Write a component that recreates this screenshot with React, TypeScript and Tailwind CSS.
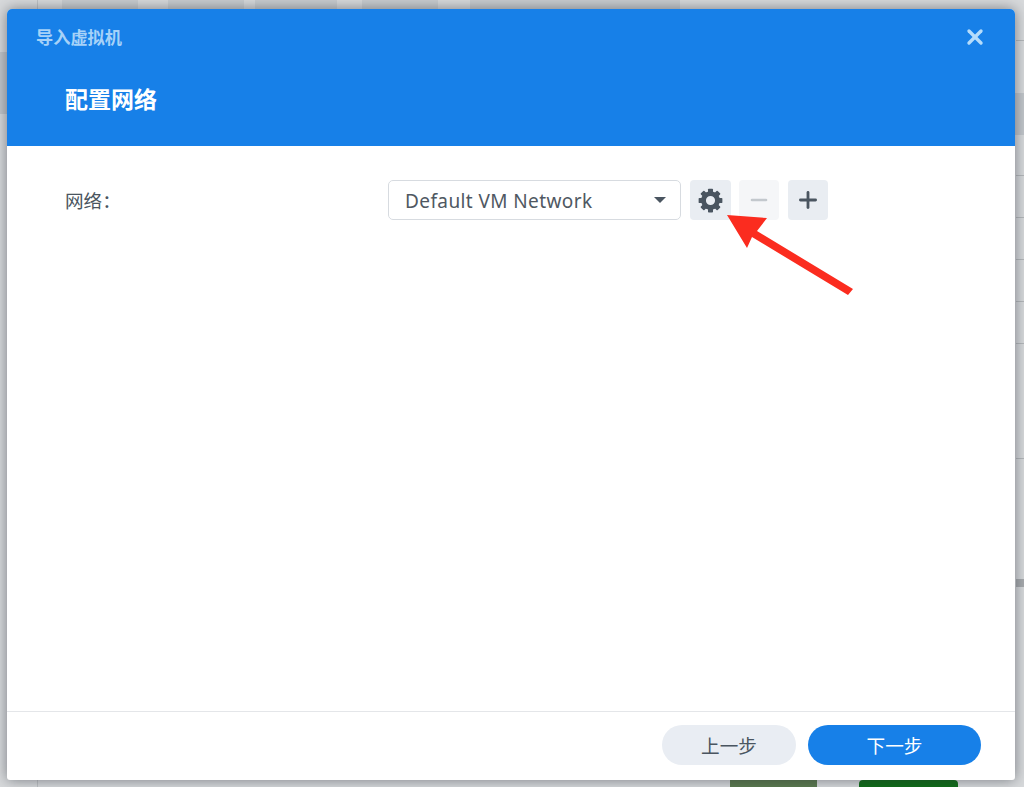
import { X, Minus, Plus } from "lucide-react";

const cjk = "font-['Noto_Sans_CJK_SC','Liberation_Sans',sans-serif]";

// Page behind the dialog, only its edges stay visible
function Backdrop() {
  return (
    <div className="absolute inset-0 overflow-hidden bg-[#d8dadc]">
      <div className="absolute left-0 top-[52px] h-[62px] w-[7px] bg-[#c2c6cb]" />
      <div className="absolute left-[1015px] top-[93px] h-[42px] w-[9px] bg-[#c2c6cb]" />
      <div className="absolute left-[37px] top-0 h-full w-px bg-[#bfc2c5]" />
      <div className="absolute left-[62px] top-0 h-[9px] w-[76px] bg-[#c9cdd0]" />
      <div className="absolute left-[168px] top-0 h-[9px] w-[76px] bg-[#c9cdd0]" />
      <div className="absolute left-[255px] top-0 h-[9px] w-[82px] bg-[#c9cdd0]" />
      <div className="absolute left-[362px] top-0 h-[9px] w-[76px] bg-[#c9cdd0]" />
      <div className="absolute left-[470px] top-0 h-[9px] w-[210px] bg-[#c9cdd0]" />
      <div className="absolute left-[730px] top-[780px] h-[7px] w-[87px] bg-[#5b7a4e]" />
      <div className="absolute left-[859px] top-[780px] h-[7px] w-[99px] rounded-t-sm bg-[#0f6d17]" />
      <div className="absolute left-[1016px] top-[40px] h-px w-2 bg-[#b5b8bb]" />
      <div className="absolute left-[1016px] top-[175px] h-px w-2 bg-[#b5b8bb]" />
      <div className="absolute left-[1016px] top-[217px] h-px w-2 bg-[#b5b8bb]" />
      <div className="absolute left-[1016px] top-[259px] h-px w-2 bg-[#b5b8bb]" />
      <div className="absolute left-[1016px] top-[301px] h-px w-2 bg-[#b5b8bb]" />
      <div className="absolute left-[1016px] top-[343px] h-px w-2 bg-[#b5b8bb]" />
      <div className="absolute left-[1016px] top-[458px] h-px w-2 bg-[#b5b8bb]" />
      <div className="absolute left-[1016px] top-[579px] h-[8px] w-2 bg-[#a8abae]" />
    </div>
  );
}

function Gear() {
  return (
    <svg width="25" height="25" viewBox="0 0 24 24" fill="currentColor">
      <circle cx="12" cy="12" r="6.7" fill="none" stroke="currentColor" strokeWidth="4.6" />
      {[0, 45, 90, 135, 180, 225, 270, 315].map((deg) => (
        <rect key={deg} x="9.6" y="0.6" width="4.8" height="5" rx="0.8" transform={`rotate(${deg} 12 12)`} />
      ))}
    </svg>
  );
}

function ToolButton({ children, className }: { children: React.ReactNode; className: string }) {
  return (
    <button className={`flex h-10 items-center justify-center rounded ${className}`}>
      {children}
    </button>
  );
}

export default function App() {
  return (
    <div className={`relative h-[787px] w-[1024px] overflow-hidden ${cjk}`}>
      <Backdrop />

      <div className="relative ml-[7px] flex h-[780px] w-[1008px] flex-col pt-[9px]">
        <div className="flex h-[771px] w-full flex-col overflow-hidden rounded-t-[5px] rounded-b-[3px] bg-white shadow-[0_0_14px_rgba(40,45,55,0.55)]">
          {/* Header */}
          <header className="h-[137px] shrink-0 bg-[#1780e8]">
            <div className="flex h-[55px] items-center justify-between pl-[29px] pr-[28px]">
              <span className="text-[17.2px] font-bold leading-none text-[#a6d2f8]">导入虚拟机</span>
              <X className="h-6 w-6 text-[#b5dcfb]" strokeWidth={3.4} />
            </div>
            <h1 className="pl-[58px] pt-[3px] text-[23px] font-bold leading-[62px] text-white">配置网络</h1>
          </header>

          {/* Form */}
          <main className="flex-1 pl-[58px] pt-[34px]">
            <div className="flex h-10 items-center">
              <label className="w-[323px] text-[18.6px] text-[#4a5560]">网络：</label>
              <div className="flex h-10 w-[293px] items-center justify-between rounded-[5px] border border-[#d7dbe0] pl-4 pr-[14px]">
                <span className="pt-[2px] font-['Noto_Sans',sans-serif] text-[19px] tracking-[0.4px] text-[#4f5862]">Default VM Network</span>
                <span className="h-0 w-0 border-x-[6px] border-t-[6px] border-x-transparent border-t-[#4a5560]" />
              </div>
              <div className="ml-[9px] flex gap-2">
                <ToolButton className="w-[41px] bg-[#e9edf2] text-[#4a5560]">
                  <Gear />
                </ToolButton>
                <ToolButton className="w-10 bg-[#f5f6f8] text-[#c3c8cd]">
                  <Minus size={24} strokeWidth={2.6} />
                </ToolButton>
                <ToolButton className="ml-px w-10 bg-[#e9edf2] text-[#4a5560]">
                  <Plus size={26} strokeWidth={2.6} />
                </ToolButton>
              </div>
            </div>
          </main>

          {/* Footer */}
          <footer className="flex h-[69px] shrink-0 items-start justify-end gap-3 border-t border-[#e4e6e9] pr-[34px] pt-[13px]">
            <button className="h-10 w-[134px] rounded-full bg-[#e9edf3] text-[18.6px] text-[#4a5560]">上一步</button>
            <button className="h-10 w-[173px] rounded-full bg-[#1780e8] text-[18.6px] text-white">下一步</button>
          </footer>
        </div>
      </div>

      {/* Annotation arrow */}
      <svg className="absolute left-0 top-0" width="1024" height="787" viewBox="0 0 1024 787" fill="none">
        <path d="M727 215 L767 218 L757 231 L853 289 L848 295 L752 237 L747 248 Z" fill="#fb2c1f" />
      </svg>
    </div>
  );
}
